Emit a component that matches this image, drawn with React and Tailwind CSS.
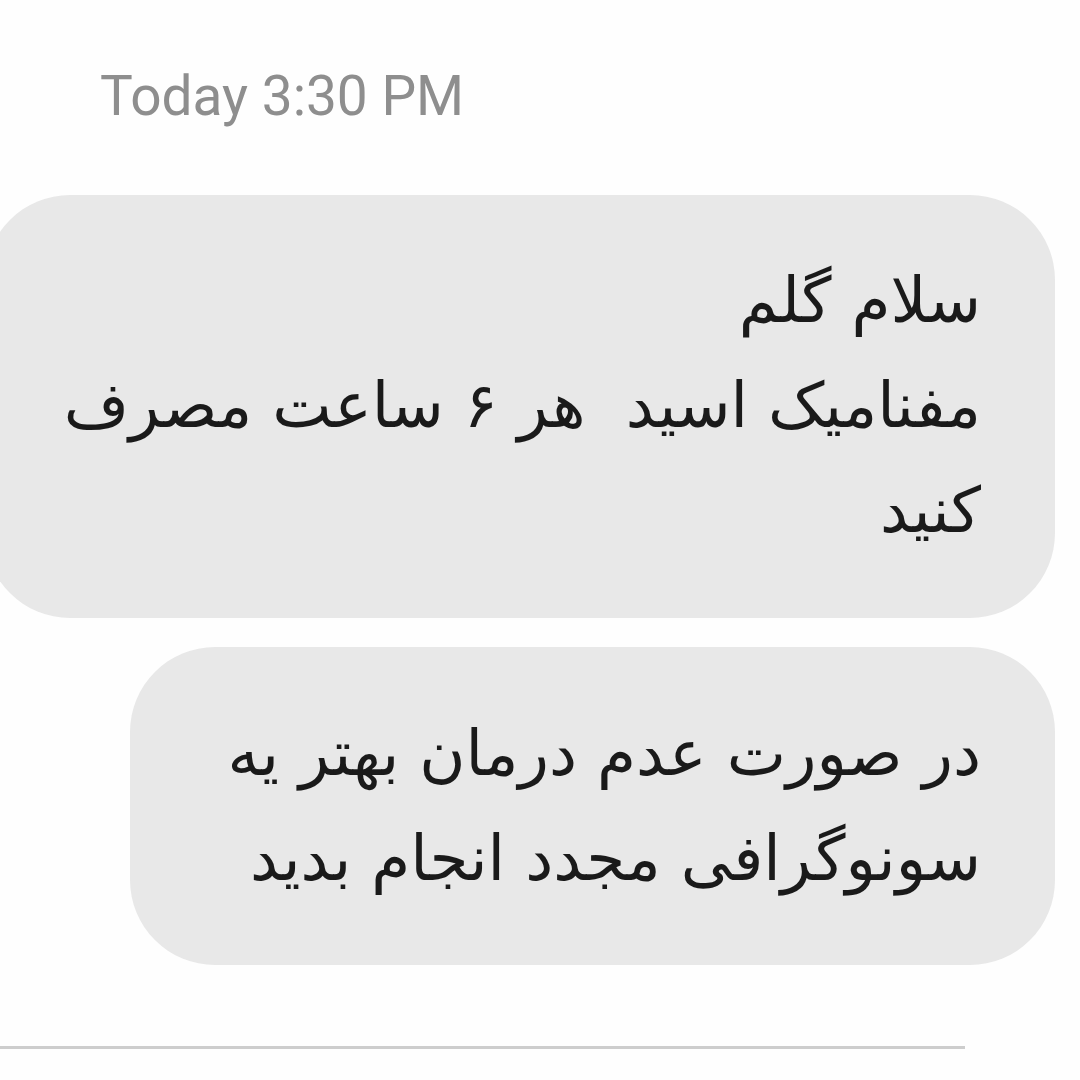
export default function App() {
  const fa = { fontFamily: '"DejaVu Sans", "Noto Sans", sans-serif' };
  return (
    <div className="w-[1080px] h-[1080px] bg-[#fefefe] overflow-hidden relative">
      <div className="flex flex-col">
        <div
          className="pl-[100px] pt-[64px] h-[195px] text-[#8e8e8e] text-[55px] leading-[64px]"
          style={{ fontFamily: 'Roboto, "Liberation Sans", sans-serif' }}
        >
          Today 3:30 PM
        </div>
        <div className="flex flex-col items-end pr-[25px] gap-[29px]">
          <div
            dir="rtl"
            className="w-[1070px] h-[423px] bg-[#e8e8e8] rounded-[85px] pr-[74px] pt-[53px] text-[#1a1a1a] text-[63px] leading-[105px] whitespace-pre-wrap"
            style={fa}
          >
            <div>سلام گلم</div>
            <div>مفنامیک اسید  هر ۶ ساعت مصرف</div>
            <div>کنید</div>
          </div>
          <div
            dir="rtl"
            className="w-[925px] h-[318px] bg-[#e8e8e8] rounded-[85px] pr-[74px] pt-[54px] text-[#1a1a1a] text-[63px] leading-[105px] whitespace-pre-wrap"
            style={fa}
          >
            <div>در صورت عدم درمان بهتر یه</div>
            <div>سونوگرافی مجدد انجام بدید</div>
          </div>
        </div>
        <div className="mt-[81px] w-[965px] h-[3px] bg-[#cdcdcd]" />
      </div>
    </div>
  );
}
